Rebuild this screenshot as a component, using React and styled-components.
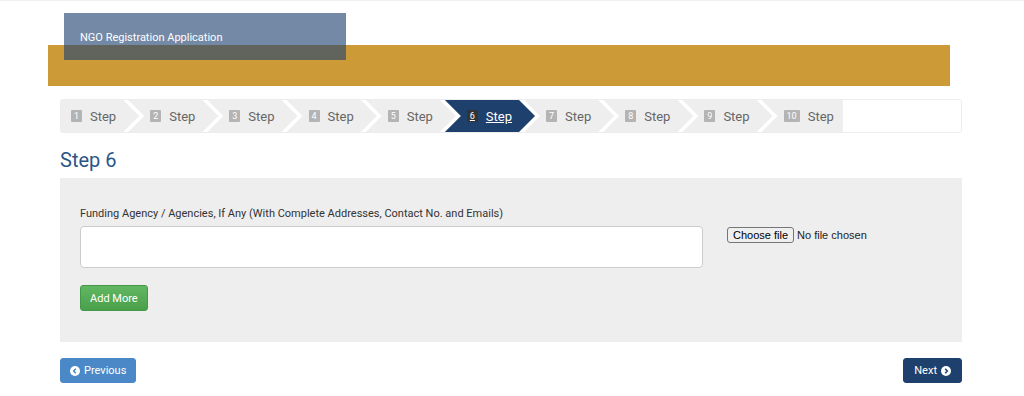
import React from 'react';
import styled, { createGlobalStyle } from 'styled-components';

const GlobalStyle = createGlobalStyle`
  body {
    margin: 0;
    background: #fff;
    font-family: Roboto, "Liberation Sans", Arial, sans-serif;
    color: #333;
  }
`;

const Page = styled.div`
  width: 1024px;
  min-height: 396px;
  border-top: 1px solid #f2f2f2;
  box-sizing: border-box;
`;

const Header = styled.header`
  position: relative;
  padding-top: 44px;
`;

const GoldBar = styled.div`
  margin-left: 48px;
  width: 902px;
  height: 41px;
  background: #cc9b38;
`;

const TitleBox = styled.div`
  position: absolute;
  top: 12px;
  left: 64px;
  width: 282px;
  height: 47px;
  box-sizing: border-box;
  padding: 18px 0 0 16px;
  background: rgba(34, 68, 114, 0.63);
  color: #fff;
  font-size: 11px;
  line-height: 14px;
`;

const Main = styled.main`
  margin: 13px 62px 0 60px;
`;

const Steps = styled.nav`
  display: flex;
  height: 32px;
  border: 1px solid #ededed;
  border-radius: 3px;
  background: #fff;
`;

const StepItem = styled.a`
  display: flex;
  align-items: center;
  gap: 8px;
  height: 32px;
  box-sizing: border-box;
  padding-left: ${({ $first }) => ($first ? '10px' : '22px')};
  padding-right: ${({ $last }) => ($last ? '9px' : '23px')};
  margin-left: ${({ $first }) => ($first ? '0' : '-11px')};
  background: ${({ $active }) => ($active ? '#1e406d' : '#eeeeee')};
  color: ${({ $active }) => ($active ? '#fff' : '#666')};
  text-decoration: ${({ $active }) => ($active ? 'underline' : 'none')};
  font-size: 13px;
  clip-path: ${({ $first, $last }) =>
    `polygon(0 0, ${$last ? '100% 0, 100% 100%' : 'calc(100% - 16px) 0, 100% 50%, calc(100% - 16px) 100%'}, 0 100%${$first ? '' : ', 16px 50%'})`};
`;

const Badge = styled.span`
  display: inline-flex;
  align-items: center;
  justify-content: center;
  min-width: 9px;
  height: 12px;
  padding: 0 ${({ $wide }) => ($wide ? '3px' : '1px')};
  border-radius: 1px;
  background: ${({ $active }) => ($active ? '#333' : '#b4b4b4')};
  color: #fff;
  font-size: 9px;
  line-height: 12px;
`;

const Heading = styled.h2`
  margin: 14px 0 0;
  font-size: 20px;
  font-weight: 400;
  line-height: 26px;
  color: #2a5689;
`;

const Panel = styled.section`
  margin-top: 5px;
  height: 164px;
  box-sizing: border-box;
  padding: 29px 20px 0;
  background: #eeeeee;
`;

const Label = styled.label`
  display: block;
  font-size: 11px;
  line-height: 14px;
  color: #333;
`;

const FieldRow = styled.div`
  display: flex;
  align-items: flex-start;
  gap: 24px;
  margin-top: 5px;
`;

const TextBox = styled.textarea`
  width: 623px;
  height: 42px;
  box-sizing: border-box;
  border: 1px solid #cccccc;
  border-radius: 4px;
  background: #fff;
  resize: none;
  font-family: inherit;
`;

const FilePicker = styled.div`
  display: flex;
  align-items: center;
  gap: 3px;
  margin-top: 1px;
  font-family: "Liberation Sans", Arial, sans-serif;
  font-size: 11px;
  color: #222;
`;

const FileButton = styled.span`
  padding: 1px 5px;
  border: 1px solid #767676;
  border-radius: 3px;
  background: #efefef;
  color: #000;
`;

const Button = styled.button`
  display: inline-flex;
  align-items: center;
  gap: 4px;
  height: ${({ $h }) => $h || 25}px;
  padding: 0 ${({ $px }) => $px || 9}px;
  border: 1px solid ${({ $border }) => $border};
  border-radius: 3px;
  background: ${({ $bg }) => $bg};
  color: #fff;
  font-family: inherit;
  font-size: 11px;
  cursor: pointer;
`;

const AddRow = styled.div`
  margin-top: 17px;
`;

const Footer = styled.div`
  display: flex;
  justify-content: space-between;
  margin-top: 16px;
`;

const CircleChevron = ({ dir, color }) => (
  <svg width="10" height="10" viewBox="0 0 12 12">
    <circle cx="6" cy="6" r="6" fill="#fff" />
    <path
      d={dir === 'left' ? 'M7 3.4L4.4 6 7 8.6' : 'M5 3.4L7.6 6 5 8.6'}
      fill="none"
      stroke={color}
      strokeWidth="1.8"
    />
  </svg>
);

const steps = [1, 2, 3, 4, 5, 6, 7, 8, 9, 10];

const App = () => (
  <Page>
    <GlobalStyle />
    <Header>
      <GoldBar />
      <TitleBox>NGO Registration Application</TitleBox>
    </Header>
    <Main>
      <Steps>
        {steps.map((n) => (
          <StepItem
            key={n}
            href="#"
            $first={n === 1}
            $last={n === 10}
            $active={n === 6}
          >
            <Badge $active={n === 6} $wide={n === 10}>{n}</Badge>
            Step
          </StepItem>
        ))}
      </Steps>
      <Heading>Step 6</Heading>
      <Panel>
        <Label>Funding Agency / Agencies, If Any (With Complete Addresses, Contact No. and Emails)</Label>
        <FieldRow>
          <TextBox />
          <FilePicker>
            <FileButton>Choose file</FileButton>
            <span>No file chosen</span>
          </FilePicker>
        </FieldRow>
        <AddRow>
          <Button $bg="linear-gradient(#62b762, #4aa04a)" $border="#45984a" $h={26}>
            Add More
          </Button>
        </AddRow>
      </Panel>
      <Footer>
        <Button $bg="#4a88c7" $border="#4a88c7">
          <CircleChevron dir="left" color="#4a88c7" />
          Previous
        </Button>
        <Button $bg="#1e406d" $border="#1e406d" $px={10}>
          Next
          <CircleChevron dir="right" color="#1e406d" />
        </Button>
      </Footer>
    </Main>
  </Page>
);

export default App;
